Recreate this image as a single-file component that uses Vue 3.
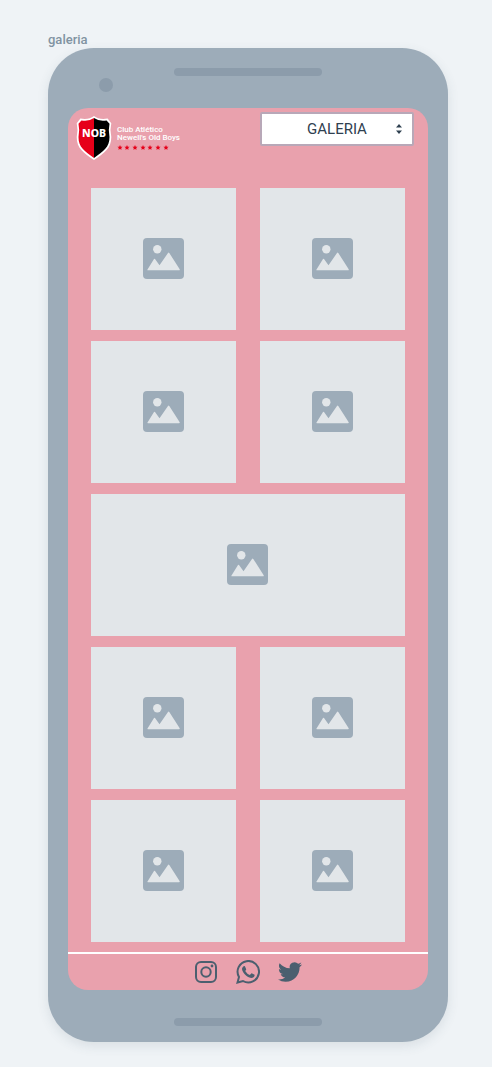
<script setup>
import { ref } from 'vue'

const section = ref('galeria')
const tiles = [
  { id: 1 }, { id: 2 }, { id: 3 }, { id: 4 },
  { id: 5, wide: true },
  { id: 6 }, { id: 7 }, { id: 8 }, { id: 9 }
]
const stars = [3, 10, 18, 26, 33, 41, 49]
</script>

<template>
  <main class="board">
    <h1 class="title">galeria</h1>
    <div class="phone">
      <div class="top">
        <span class="camera"></span>
        <span class="speaker"></span>
      </div>
      <div class="screen">
        <header class="header">
          <div class="brand">
            <svg class="shield" viewBox="1 1 34 42" aria-label="NOB" role="img">
              <path d="M18 1 Q13 5 5 3.500 L1.500 8 Q3 14 1.500 21 C1.500 32 8 36 18 43 C28 36 34.500 32 34.500 21 Q33 14 34.500 8 L31 3.500 Q23 5 18 1Z" fill="#fff" />
              <path d="M18 3 Q13 6.500 6 5.200 L3.200 8.500 Q4.500 14 3.200 21 C3.200 31 9 34.500 18 41Z" fill="#e60019" />
              <path d="M18 3 Q23 6.500 30 5.200 L32.800 8.500 Q31.500 14 32.800 21 C32.800 31 27 34.500 18 41Z" fill="#000" />
              <text x="18" y="21" text-anchor="middle" class="monogram">NOB</text>
            </svg>
            <div class="club">
              <span>Club Atlético</span>
              <span>Newell's Old Boys</span>
              <svg class="stars" viewBox="0 0 52 5" aria-hidden="true">
                <path v-for="x in stars" :key="x" :transform="`translate(${x} 2.5)`" d="M0-2.500L.8-.8L2.600-.7L1.200.5L1.600 2.300L0 1.400L-1.600 2.300L-1.200.5L-2.600-.7L-.8-.8Z" fill="#e60019" />
              </svg>
            </div>
          </div>
          <div class="picker">
            <select v-model="section" aria-label="Sección">
              <option value="galeria">GALERIA</option>
            </select>
            <svg class="arrows" viewBox="0 0 6 10" aria-hidden="true">
              <path d="M3 0L6 3.500H0ZM3 10L6 6.500H0Z" fill="#2f4050" />
            </svg>
          </div>
        </header>

        <section class="gallery">
          <div v-for="tile in tiles" :key="tile.id" class="tile" :class="{ wide: tile.wide }">
            <svg class="picture" viewBox="0 0 41 41" aria-hidden="true">
              <rect width="41" height="41" rx="4" fill="#9dacb9" />
              <circle cx="14.300" cy="11.300" r="4.200" fill="#e2e6e9" />
              <path d="M4.500 31.500L11 21Q11.500 20.300 12 21L16.500 27.300L25 15Q25.700 14.200 26.300 15L36.700 31.200Q37 32.300 36 32.300H5Q4 32.300 4.500 31.500Z" fill="#e2e6e9" />
            </svg>
          </div>
        </section>

        <footer class="footer">
          <a href="#instagram" aria-label="Instagram">
            <svg viewBox="0 0 24 24">
              <rect x="2" y="2" width="20" height="20" rx="5" fill="none" stroke="#4b5f6f" stroke-width="2" />
              <circle cx="12" cy="12" r="4.700" fill="none" stroke="#4b5f6f" stroke-width="2" />
              <circle cx="18" cy="6" r="1.400" fill="#4b5f6f" />
            </svg>
          </a>
          <a href="#whatsapp" aria-label="WhatsApp">
            <svg viewBox="0 0 24 24">
              <path d="M1.500 22.500L3 17A10.700 10.700 0 1 1 7 21Z" fill="none" stroke="#4b5f6f" stroke-width="2" />
              <path d="M7.300 6.400Q8 5.800 8.900 6.300L10.200 9.300Q10.300 9.900 9.200 11.100Q11 14.200 13.900 15L15.200 13.500Q15.600 13.200 16.100 13.500L18.600 14.800C18.900 15.700 18 17.300 16.600 17.800C14.500 18.200 11.800 17 10 15.400C7.900 13.600 6 10.900 6 9Q6 7.400 7.300 6.400Z" fill="#4b5f6f" />
            </svg>
          </a>
          <a href="#twitter" aria-label="Twitter">
            <svg viewBox="0 0 24 24">
              <path fill="#4b5f6f" d="M23.953 4.570a10 10 0 01-2.825.775 4.958 4.958 0 002.163-2.723c-.951.555-2.005.959-3.127 1.184a4.920 4.920 0 00-8.384 4.482C7.690 8.095 4.067 6.130 1.640 3.162a4.822 4.822 0 00-.666 2.475c0 1.710.870 3.213 2.188 4.096a4.904 4.904 0 01-2.228-.616v.060a4.923 4.923 0 003.946 4.827 4.996 4.996 0 01-2.212.085 4.936 4.936 0 004.604 3.417 9.867 9.867 0 01-6.102 2.105c-.390 0-.779-.023-1.170-.067a13.995 13.995 0 007.557 2.209c9.053 0 13.998-7.496 13.998-13.985 0-.210 0-.420-.015-.630A9.935 9.935 0 0024 4.590z" />
            </svg>
          </a>
        </footer>
      </div>
      <div class="bottom"><span class="speaker"></span></div>
    </div>
  </main>
</template>

<style>
body {
  background: #eff3f6;
}
</style>

<style scoped>
.board {
  box-sizing: border-box;
  min-height: 100vh;
  padding: 32px 44px 24px 48px;
  font-family: Roboto, "Liberation Sans", sans-serif;
}
.title {
  margin: 0;
  font-size: 13px;
  line-height: 16px;
  font-weight: 500;
  color: #8193a2;
}
.phone {
  padding: 0 20px;
  border-radius: 46px;
  background: #9dacb9;
  box-shadow: 0 4px 12px rgba(60, 80, 100, 0.12);
}
.top {
  position: relative;
  height: 60px;
  display: flex;
  justify-content: center;
  align-items: flex-start;
  padding-top: 20px;
  box-sizing: border-box;
}
.speaker {
  width: 148px;
  height: 8px;
  border-radius: 4px;
  background: #8c9cab;
}
.camera {
  position: absolute;
  left: 31px;
  top: 30px;
  width: 14px;
  height: 14px;
  border-radius: 50%;
  background: #8c9cab;
}
.screen {
  overflow: hidden;
  border-radius: 20px;
  background: #e9a1ad;
}
.header {
  display: flex;
  justify-content: space-between;
  align-items: flex-start;
  height: 80px;
  padding: 4px 14px 0 8px;
  box-sizing: border-box;
}
.brand {
  display: flex;
  gap: 5px;
  padding-top: 4px;
}
.shield {
  width: 36px;
  height: 44px;
}
.monogram {
  font-family: "Noto Sans", sans-serif;
  font-size: 10px;
  font-weight: 800;
  fill: #fff;
}
.club {
  display: flex;
  flex-direction: column;
  padding-top: 10px;
  font-size: 8px;
  line-height: 8px;
  font-weight: 500;
  color: #fff;
  white-space: nowrap;
}
.stars {
  width: 52px;
  height: 5px;
  margin-top: 3px;
}
.picker {
  position: relative;
  width: 154px;
}
select {
  display: block;
  width: 100%;
  height: 34px;
  padding: 0;
  border: 2px solid #b8a8b8;
  border-radius: 2px;
  background: #fff;
  appearance: none;
  font: 15px/20px Roboto, "Liberation Sans", sans-serif;
  color: #2f4050;
  text-align: center;
  text-align-last: center;
}
.arrows {
  position: absolute;
  right: 12px;
  top: 12px;
  width: 6px;
  height: 10px;
  pointer-events: none;
}
.gallery {
  display: grid;
  grid-template-columns: 1fr 1fr;
  grid-auto-rows: 142px;
  gap: 11px 24px;
  padding: 0 23px 10px;
}
.tile {
  display: flex;
  justify-content: center;
  align-items: center;
  padding-bottom: 1px;
  background: #e2e6e9;
}
.wide {
  grid-column: span 2;
  padding-right: 1px;
}
.picture {
  width: 41px;
  height: 41px;
}
.footer {
  display: flex;
  justify-content: center;
  align-items: center;
  gap: 18px;
  height: 36px;
  border-top: 2px solid #fff;
}
.footer a,
.footer svg {
  display: block;
  width: 24px;
  height: 24px;
}
.bottom {
  display: flex;
  justify-content: center;
  height: 24px;
  padding-top: 28px;
}
</style>
